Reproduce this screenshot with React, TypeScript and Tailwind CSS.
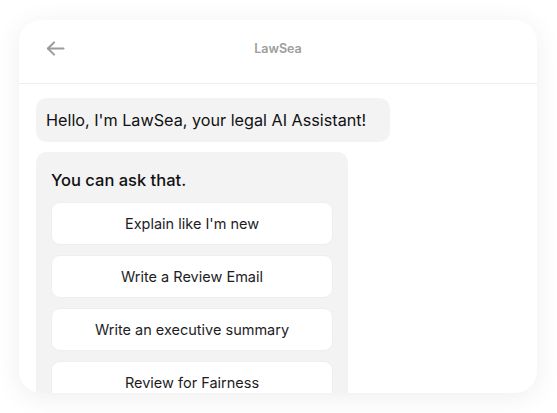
import React from 'react';

const suggestions = [
  'Explain like I\'m new',
  'Write a Review Email',
  'Write an executive summary',
  'Review for Fairness',
];

const BackArrow = () => (
  <svg width="19" height="17" viewBox="0 0 20 18" fill="none" stroke="#9b9b9b" strokeWidth="2.2" strokeLinecap="round" strokeLinejoin="round">
    <path d="M18.5 9H2" />
    <path d="M8.5 2.5L2 9l6.5 6.5" />
  </svg>
);

const App: React.FC = () => {
  return (
    <div className="w-[557px] h-[413px] bg-white pt-5 pl-[19px] font-['Inter',sans-serif]">
      <div className="w-[518px] h-[373px] bg-white rounded-[22px] shadow-[0_4px_28px_rgba(0,0,0,0.07)] overflow-hidden flex flex-col">
        {/* Header */}
        <div className="h-16 shrink-0 border-b border-[#eceef2] flex items-center pb-[6px] pl-[27px] relative">
          <BackArrow />
          <span className="absolute left-1/2 top-[20px] -translate-x-1/2 text-[12.5px] font-semibold text-[#9d9d9d]">LawSea</span>
        </div>

        <div className="flex flex-col items-start gap-[10px] px-[17px] pt-[14px]">
          <div className="w-[354px] bg-[#f3f3f4] rounded-[10px] h-[44px] pl-[10px] flex items-center text-[16.2px] text-[#111]">
            Hello, I'm LawSea, your legal AI Assistant!
          </div>

          <div className="w-[312px] bg-[#f3f3f4] rounded-[10px] px-[15px] pt-4 pb-4">
            <div className="text-[16.5px] font-medium text-[#111] leading-6 mb-[10px]">You can ask that.</div>
            <div className="flex flex-col gap-[10px]">
              {suggestions.map(s => (
                <button
                  key={s}
                  className="h-[43px] w-full bg-white rounded-[9px] border border-[#eeeef2] text-[14.5px] text-[#1d1d1f] flex items-center justify-center"
                >
                  {s}
                </button>
              ))}
            </div>
          </div>
        </div>
      </div>
    </div>
  );
};

export default App;
